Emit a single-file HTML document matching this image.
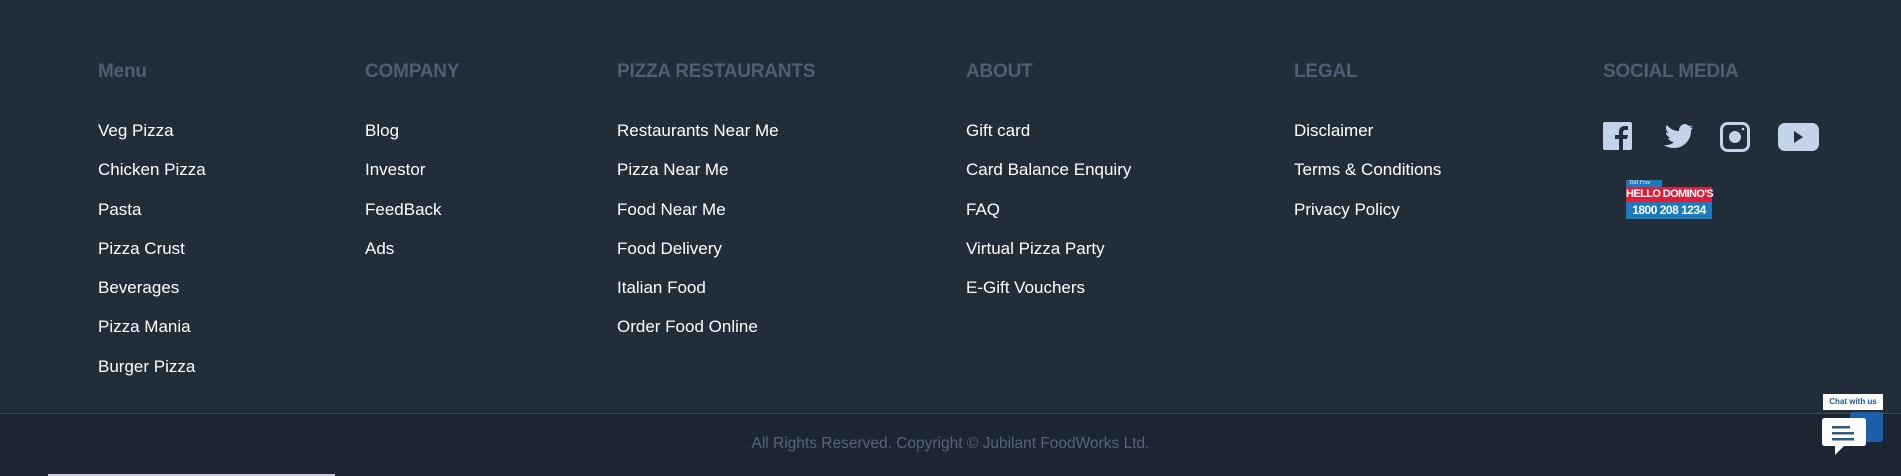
<!DOCTYPE html>
<html><head><meta charset="utf-8"><style>
*{margin:0;padding:0;box-sizing:border-box}
body{width:1901px;height:476px;background:#222d3a;font-family:"Liberation Sans",sans-serif;position:relative;overflow:hidden}
.col{position:absolute;top:58px}
.col h4{font-size:19px;font-weight:600;color:#4f5e72;height:28px;line-height:28px;margin-bottom:31px;letter-spacing:-0.2px}
.col a{display:block;color:#fff;font-size:17px;height:39.3px;line-height:28px;text-decoration:none}
.bottom{position:absolute;left:0;top:413px;width:1901px;height:63px;background:#1c2532;border-top:1px solid #3a4656}
.copy{position:absolute;top:435px;width:100%;text-align:center;left:0;color:#56647a;font-size:15.5px}
.bar{position:absolute;left:48px;top:474px;width:287px;height:2px;background:#ccd}
.n{white-space:nowrap;font-weight:bold;font-family:"Liberation Sans Narrow","Liberation Sans",sans-serif;color:#fff;text-align:center;position:absolute;left:0;width:86px}
</style></head><body>
<div class="col" style="left:98px"><h4>Menu</h4><a>Veg Pizza</a><a>Chicken Pizza</a><a>Pasta</a><a>Pizza Crust</a><a>Beverages</a><a>Pizza Mania</a><a>Burger Pizza</a></div>
<div class="col" style="left:365px"><h4>COMPANY</h4><a>Blog</a><a>Investor</a><a>FeedBack</a><a>Ads</a></div>
<div class="col" style="left:617px"><h4>PIZZA RESTAURANTS</h4><a>Restaurants Near Me</a><a>Pizza Near Me</a><a>Food Near Me</a><a>Food Delivery</a><a>Italian Food</a><a>Order Food Online</a></div>
<div class="col" style="left:966px"><h4>ABOUT</h4><a>Gift card</a><a>Card Balance Enquiry</a><a>FAQ</a><a>Virtual Pizza Party</a><a>E-Gift Vouchers</a></div>
<div class="col" style="left:1294px"><h4>LEGAL</h4><a>Disclaimer</a><a>Terms &amp; Conditions</a><a>Privacy Policy</a></div>
<div class="col" style="left:1603px"><h4>SOCIAL MEDIA</h4></div>
<svg style="position:absolute;left:1603px;top:121px" width="220" height="32" viewBox="0 0 220 32">
<rect x="0" y="1" width="29" height="28" rx="2" fill="#c3d4ea"/>
<path d="M16 29V18h-4v-4h4v-3c0-4 2-6 6-6h3v4h-2c-2 0-3 1-3 2v3h5l-1 4h-4v11z" fill="#222d3a"/>
<path d="M90 6c-1 1-2 1-3 1 1-1 2-2 2-3-1 1-2 1-3 1-1-1-3-2-4-2-3 0-6 3-6 6v1c-5 0-9-2-12-6-1 1-1 2-1 3 0 2 1 4 3 5-1 0-2 0-3-1 0 3 2 5 5 6-1 0-2 0-3 0 1 2 3 4 6 4-2 2-5 3-8 3h-2c3 2 6 3 10 3 11 0 17-9 17-17v-1c1-1 2-2 2-3z" fill="#c3d4ea"/>
<rect x="118.5" y="2.5" width="27" height="27" rx="6" fill="none" stroke="#c3d4ea" stroke-width="3"/>
<circle cx="132" cy="16" r="6" fill="#c3d4ea"/><circle cx="140" cy="8" r="1.3" fill="#c3d4ea"/>
<rect x="175" y="2" width="41" height="28" rx="7" fill="#c3d4ea"/>
<path d="M191 10v12l9-6z" fill="#222d3a"/>
</svg>
<div style="position:absolute;left:1626px;top:180px;width:86px;height:39px">
<div style="position:absolute;left:0;top:0;width:36px;height:7px;background:#1a7ac0;color:#fff;font:italic 6px 'Liberation Serif',serif;line-height:7px;padding-left:3px;white-space:nowrap;overflow:hidden">Toll Free</div>
<div class="n" style="top:7px;height:15px;background:#d8203a;font-size:11px;line-height:15px;letter-spacing:-0.6px">HELLO DOMINO'S</div>
<div class="n" style="top:22px;height:17px;background:#1a7ac0;font-size:12px;line-height:17px;letter-spacing:-0.5px">1800 208 1234</div>
</div>
<div class="bottom"></div>
<div class="copy">All Rights Reserved. Copyright © Jubilant FoodWorks Ltd.</div>
<div class="bar"></div>
<div style="position:absolute;left:1823px;top:394px;width:60px;height:16px;background:#fff;color:#1a5d9a;font:bold 8px 'Liberation Sans',sans-serif;line-height:16px;text-align:center">Chat with us</div>
<div style="position:absolute;left:1850px;top:412px;width:33px;height:30px;background:#1a5fa8;border-radius:3px"></div>
<svg style="position:absolute;left:1822px;top:416px" width="44" height="40" viewBox="0 0 44 40">
<path d="M3 2h38c2 0 3 1 3 3v22c0 2-1 3-3 3H22l-9 9v-9H3c-2 0-3-1-3-3V5c0-2 1-3 3-3z" fill="#fff"/>
<rect x="10" y="10" width="18" height="2.5" fill="#2a5b8a"/><rect x="10" y="16" width="22" height="2.5" fill="#2a5b8a"/><rect x="10" y="22" width="22" height="2.5" fill="#2a5b8a"/>
</svg>
</body></html>
